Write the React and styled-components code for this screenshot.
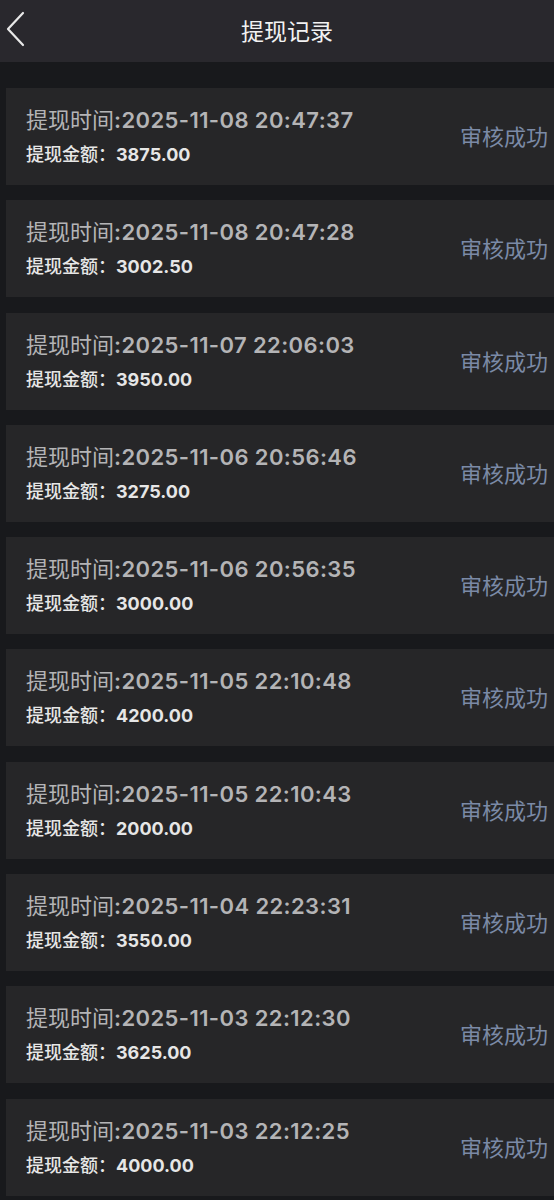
import React from "react";
import styled, { createGlobalStyle } from "styled-components";

const GlobalStyle = createGlobalStyle`
  html, body {
    margin: 0;
    padding: 0;
    background: #18191c;
  }
  body {
    font-family: Inter, "Noto Sans CJK SC", sans-serif;
  }
`;

const records = [
  { time: "2025-11-08 20:47:37", amount: "3875.00" },
  { time: "2025-11-08 20:47:28", amount: "3002.50" },
  { time: "2025-11-07 22:06:03", amount: "3950.00" },
  { time: "2025-11-06 20:56:46", amount: "3275.00" },
  { time: "2025-11-06 20:56:35", amount: "3000.00" },
  { time: "2025-11-05 22:10:48", amount: "4200.00" },
  { time: "2025-11-05 22:10:43", amount: "2000.00" },
  { time: "2025-11-04 22:23:31", amount: "3550.00" },
  { time: "2025-11-03 22:12:30", amount: "3625.00" },
  { time: "2025-11-03 22:12:25", amount: "4000.00" },
];

const App = () => {
  return (
    <Page>
      <GlobalStyle />
      <Header>
        <BackButton>
          <svg width="20" height="36" viewBox="0 0 20 36" fill="none">
            <path d="M18 2 L3 18 L18 34" stroke="#e8e8e8" strokeWidth="2.2" strokeLinecap="round" strokeLinejoin="round" />
          </svg>
        </BackButton>
        <Title>提现记录</Title>
      </Header>
      <List>
        {records.map((r) => (
          <Card key={r.time}>
            <Info>
              <TimeLine>
                提现时间<Num>:{r.time}</Num>
              </TimeLine>
              <AmountLine>
                提现金额：<Amount>{r.amount}</Amount>
              </AmountLine>
            </Info>
            <Status>审核成功</Status>
          </Card>
        ))}
      </List>
    </Page>
  );
};

export default App;

const Page = styled.div`
  width: 554px;
  min-height: 1200px;
  background: #18191c;
  overflow: hidden;
`;

const Header = styled.div`
  position: relative;
  height: 62px;
  background: #29282d;
  display: flex;
  align-items: center;
  justify-content: center;
`;

const BackButton = styled.div`
  position: absolute;
  left: 5px;
  top: 11px;
  display: flex;
`;

const Title = styled.div`
  color: #f2f2f2;
  font-size: 23px;
  font-family: "Noto Sans CJK SC", sans-serif;
  margin-left: 20px;
  margin-top: -2px;
`;

const List = styled.div`
  display: flex;
  flex-direction: column;
  gap: 15.3px;
  padding: 26px 0 0 6px;
`;

const Card = styled.div`
  height: 97px;
  box-sizing: border-box;
  background: #262628;
  display: flex;
  align-items: center;
  justify-content: space-between;
  padding: 0 6px 0 20px;
`;

const Info = styled.div`
  display: flex;
  flex-direction: column;
  gap: 7px;
  margin-top: -2px;
`;

const TimeLine = styled.div`
  color: #b4b4b6;
  font-size: 22px;
  line-height: 28px;
  font-family: "Noto Sans CJK SC", sans-serif;
`;

const Num = styled.span`
  font-family: Inter, "Noto Sans CJK SC", sans-serif;
  font-weight: 600;
  letter-spacing: 0.4px;
`;

const AmountLine = styled.div`
  color: #e6e6e6;
  font-size: 18px;
  line-height: 24px;
  font-weight: 500;
  font-family: "Noto Sans CJK SC", sans-serif;
`;

const Amount = styled.span`
  font-family: Inter, sans-serif;
  font-weight: 700;
  font-size: 18px;
`;

const Status = styled.div`
  color: #7b8aa6;
  font-size: 22px;
  margin-top: -3px;
  font-family: "Noto Sans CJK SC", sans-serif;
`;
